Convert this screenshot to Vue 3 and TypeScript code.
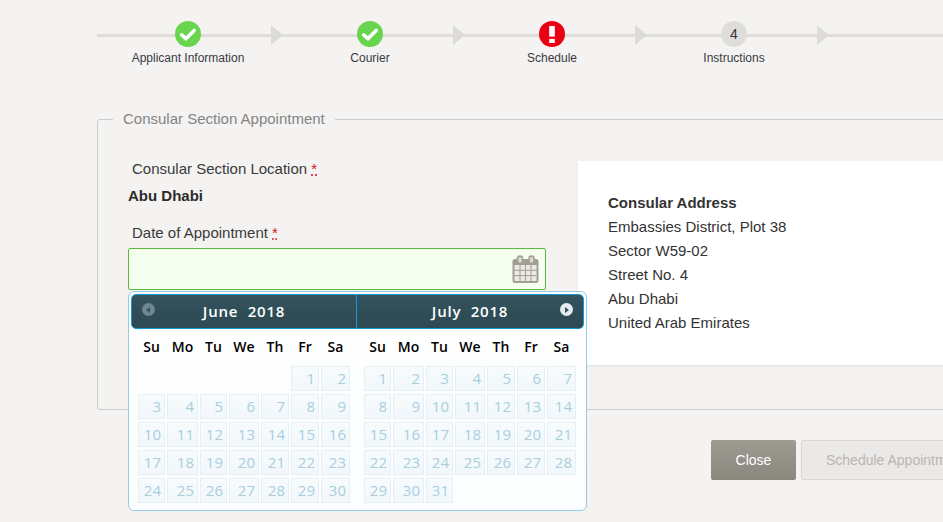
<script setup lang="ts">
interface Step { label: string; state: 'done' | 'error' | 'todo'; num?: number }
const steps: Step[] = [
  { label: 'Applicant Information', state: 'done' },
  { label: 'Courier', state: 'done' },
  { label: 'Schedule', state: 'error' },
  { label: 'Instructions', state: 'todo', num: 4 },
]
const dows = ['Su', 'Mo', 'Tu', 'We', 'Th', 'Fr', 'Sa']
function monthCells(blank: number, days: number): (number | null)[] {
  const out: (number | null)[] = []
  for (let i = 0; i < blank; i++) out.push(null)
  for (let d = 1; d <= days; d++) out.push(d)
  return out
}
const months = [
  { title: 'June', year: '2018', cells: monthCells(5, 30), cls: 'm-june' },
  { title: 'July', year: '2018', cells: monthCells(0, 31), cls: 'm-july' },
]
const address = ['Embassies District, Plot 38', 'Sector W59-02', 'Street No. 4', 'Abu Dhabi', 'United Arab Emirates']
</script>

<template>
  <div class="page">
    <div class="steps">
      <div v-for="s in steps" :key="s.label" class="step">
        <span class="arrow"></span>
        <span class="badge" :class="s.state">
          <svg v-if="s.state === 'done'" width="18" height="15" viewBox="0 0 18 15"><path d="M2.6 7.8 6.9 11.8 15.2 3.4" fill="none" stroke="#fff" stroke-width="3.6" stroke-linecap="round" stroke-linejoin="round" /></svg>
          <svg v-else-if="s.state === 'error'" width="8" height="19" viewBox="0 0 8 19"><path d="M1.2 1h5.6v10.5H1.2zM1.2 14h5.6v4H1.2z" fill="#fff" /></svg>
          <template v-else>{{ s.num }}</template>
        </span>
        <span class="step-label">{{ s.label }}</span>
      </div>
    </div>

    <fieldset class="box">
      <legend>Consular Section Appointment</legend>
      <div class="columns">
        <div class="left">
          <label class="lbl">Consular Section Location <abbr>*</abbr></label>
          <div class="value">Abu Dhabi</div>
          <label class="lbl second">Date of Appointment <abbr>*</abbr></label>
          <div class="date-field">
            <input class="date-input" type="text" />
            <svg class="cal-icon" width="27" height="28" viewBox="0 0 27 28">
              <rect x="0.5" y="4" width="26" height="24" rx="2.5" fill="#a19e96" />
              <rect x="2.5" y="10" width="22" height="16" fill="#ece9e2" />
              <path d="M8 10v16M13.5 10v16M19 10v16M2.5 15.3h22M2.5 20.6h22" stroke="#a19e96" stroke-width="1" fill="none" />
              <rect x="5.5" y="1" width="5" height="7.5" rx="2.5" fill="#d8d6cf" stroke="#a19e96" stroke-width="1.5" />
              <rect x="17" y="1" width="5" height="7.5" rx="2.5" fill="#d8d6cf" stroke="#a19e96" stroke-width="1.5" />
            </svg>
            <div class="picker">
              <div class="picker-head">
                <div v-for="(m, i) in months" :key="m.title" class="head-cell" :class="m.cls">
                  <span v-if="i === 0" class="nav off"><i class="tri left-tri"></i></span>
                  <span class="head-title">{{ m.title }}&nbsp; {{ m.year }}</span>
                  <span v-if="i === 1" class="nav on"><i class="tri right-tri"></i></span>
                </div>
              </div>
              <div class="months">
                <div v-for="m in months" :key="m.title" class="month" :class="m.cls">
                  <div class="grid dows">
                    <span v-for="d in dows" :key="d" class="dow">{{ d }}</span>
                  </div>
                  <div class="grid days">
                    <template v-for="(c, idx) in m.cells" :key="idx">
                      <span v-if="c" class="day">{{ c }}</span>
                      <span v-else></span>
                    </template>
                  </div>
                </div>
              </div>
            </div>
          </div>
        </div>
        <div class="address">
          <strong>Consular Address</strong>
          <div v-for="l in address" :key="l">{{ l }}</div>
        </div>
      </div>
    </fieldset>

    <div class="actions">
      <button class="btn close" type="button">Close</button>
      <button class="btn schedule" type="button" disabled>Schedule Appointment</button>
    </div>
  </div>
</template>

<style>
html, body { margin: 0; background: #f4f3f1; overflow: hidden; }
</style>

<style scoped>
.page {
  width: 943px;
  height: 522px;
  overflow: hidden;
  box-sizing: border-box;
  padding-left: 97px;
  font-family: "Liberation Sans", Arial, sans-serif;
  color: #333;
  background: #f4f3f1;
}
.steps {
  display: flex;
  width: 846px;
  height: 110px;
  padding-top: 21px;
  box-sizing: border-box;
  background: linear-gradient(#dfddd9, #dfddd9) 0 34px / 100% 3px no-repeat;
}
.step {
  position: relative;
  width: 182px;
  flex: none;
  display: flex;
  flex-direction: column;
  align-items: center;
}
.arrow {
  position: absolute;
  left: 174px;
  top: 4px;
  border-left: 12px solid #dcdbd7;
  border-top: 10px solid transparent;
  border-bottom: 10px solid transparent;
}
.badge {
  width: 26px;
  height: 26px;
  border-radius: 50%;
  display: flex;
  align-items: center;
  justify-content: center;
  font-size: 14px;
  color: #333;
}
.badge.done { background: #69d44e; }
.badge.error { background: #ea0013; }
.badge.todo { background: #dfddd9; }
.step-label {
  margin-top: 4px;
  font-size: 12px;
  line-height: 14px;
  color: #3a3a44;
  white-space: nowrap;
}
.box {
  margin: 0;
  padding: 0 0 0 30px;
  width: 900px;
  height: 300px;
  box-sizing: border-box;
  border: 1px solid #ccc;
  border-radius: 3px;
  min-width: 0;
}
legend {
  margin-left: -15px;
  padding: 0 10px;
  font-size: 15px;
  line-height: 18px;
  color: #848484;
}
.columns {
  display: flex;
  gap: 32px;
  align-items: flex-start;
  padding-top: 32px;
}
.left { width: 418px; flex: none; }
.lbl {
  display: block;
  padding-left: 4px;
  font-size: 15px;
  line-height: 18px;
  color: #3a3a3a;
}
.second { margin-top: 19px; }
abbr {
  color: #d9121f;
  text-decoration: underline dotted;
}
.value {
  margin-top: 9px;
  font-size: 15px;
  font-weight: bold;
  line-height: 18px;
  color: #2b2b2b;
}
.date-field {
  position: relative;
  margin-top: 6px;
}
.date-input {
  display: block;
  width: 100%;
  height: 42px;
  box-sizing: border-box;
  border: 1px solid #5bb93c;
  border-radius: 2px;
  background: #f5fff0;
  outline: none;
  padding: 0;
}
.cal-icon {
  position: absolute;
  right: 7px;
  top: 7px;
}
.picker {
  position: absolute;
  left: 0;
  top: 43px;
  width: 459px;
  height: 220px;
  box-sizing: border-box;
  background: linear-gradient(#ffffff, #fbfdfe);
  border: 1px solid #93cde4;
  border-radius: 6px;
  padding: 2px;
  font-family: "Open Sans", "Liberation Sans", sans-serif;
}
.picker-head {
  display: flex;
  height: 35px;
  box-sizing: border-box;
  border: 1px solid #149ad6;
  border-radius: 5px;
  background: linear-gradient(#35545f, #304e58 50%, #2e4953);
}
.head-cell {
  position: relative;
  width: 224px;
  display: flex;
  align-items: center;
  justify-content: center;
  flex: none;
}
.head-cell.m-july { border-left: 1px solid #149ad6; flex: 1; width: auto; }
.head-title {
  color: #fff;
  font-size: 15px;
  font-weight: 600;
  letter-spacing: 0.8px;
  position: relative;
  top: -1px;
}
.nav {
  position: absolute;
  top: 8px;
  width: 13px;
  height: 13px;
  border-radius: 50%;
  display: flex;
  align-items: center;
  justify-content: center;
}
.nav.off { left: 10px; background: #6f8791; }
.nav.on { right: 10px; background: #e6edf0; }
.tri {
  display: block;
  border-top: 3.5px solid transparent;
  border-bottom: 3.5px solid transparent;
}
.left-tri { border-right: 4px solid #33535f; margin-right: 1px; }
.right-tri { border-left: 4px solid #33535f; margin-left: 1px; }
.months { display: flex; }
.month { flex: none; }
.m-june.month { margin-left: 7px; width: 212px; }
.m-july.month { margin-left: 14px; width: 212px; }
.grid {
  display: grid;
  grid-template-columns: 27px 31px 27px 30px 28px 28px 29px;
  column-gap: 2px;
}
.dows { height: 35px; align-items: center; }
.dow {
  font-size: 14px;
  font-weight: 600;
  text-align: center;
  color: #000;
}
.days {
  margin-top: 2px;
  row-gap: 3px;
  grid-auto-rows: 25px;
}
.day {
  box-sizing: border-box;
  border: 1px solid #e6eff4;
  background: linear-gradient(#f7fbfd, #f1f7fb);
  color: #a9cfde;
  font-size: 15px;
  line-height: 23px;
  text-align: right;
  padding-right: 3px;
}
.address {
  flex: none;
  width: 420px;
  height: 204px;
  box-sizing: border-box;
  margin-top: 1px;
  padding: 30px 30px;
  background: #fff;
  box-shadow: 0 1px 2px rgba(0, 0, 0, 0.1);
  font-size: 15px;
  line-height: 24px;
  color: #333;
}
.address strong { display: block; }
.actions {
  display: flex;
  gap: 5px;
  margin-top: 30px;
  margin-left: 614px;
  width: 400px;
}
.btn {
  height: 40px;
  box-sizing: border-box;
  font-family: inherit;
  font-size: 14px;
  border-radius: 2px;
  padding: 0 24px;
  white-space: nowrap;
  flex: none;
}
.close {
  width: 85px;
  border: none;
  color: #fff;
  background: linear-gradient(#9e9b92, #8a877f);
}
.schedule {
  border: 1px solid #d9d7d4;
  background: #ebe9e7;
  color: #b9b5b0;
}
</style>
